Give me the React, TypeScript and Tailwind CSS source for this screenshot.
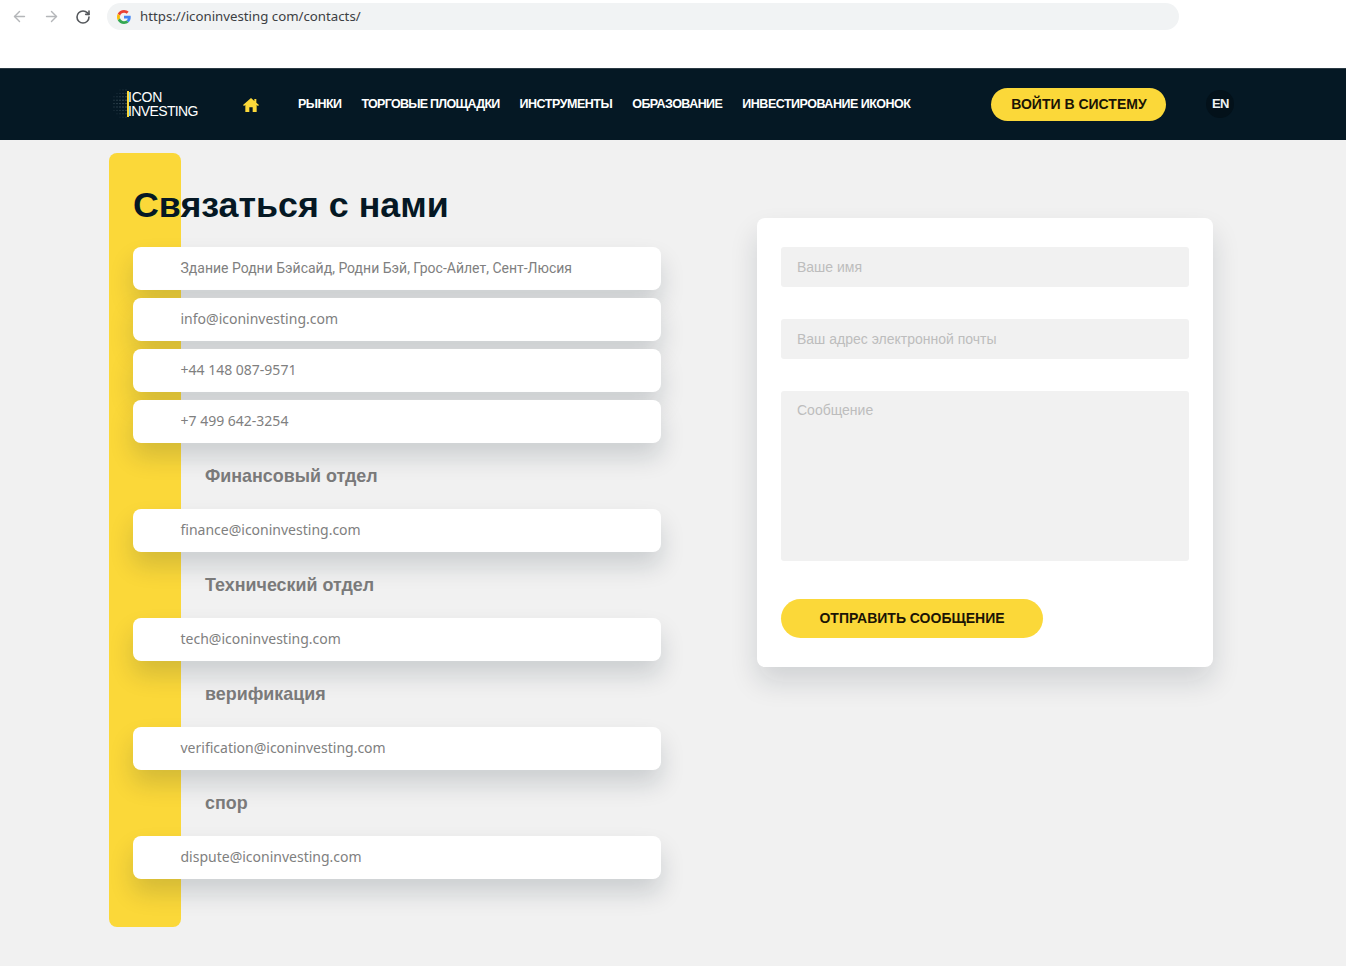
import { ArrowLeft, ArrowRight, RotateCw } from "lucide-react";

const navItems = [
  { label: "РЫНКИ", className: "" },
  { label: "ТОРГОВЫЕ ПЛОЩАДКИ", className: "tracking-[-0.72px]" },
  { label: "ИНСТРУМЕНТЫ", className: "tracking-[-0.48px]" },
  { label: "ОБРАЗОВАНИЕ", className: "" },
  { label: "ИНВЕСТИРОВАНИЕ ИКОНОК", className: "tracking-[-0.5px]" },
];

const dots: [number, number, number][] = [];
for (let col = 0; col < 5; col++) {
  for (let row = 0; row < 9; row++) {
    const dist = Math.abs(row - 4) + (4 - col) * 0.7;
    if (dist < 5.5) dots.push([col * 3 + 1, row * 3.4 + 1, 0.7 - dist * 0.11]);
  }
}

const Logo = () => (
  <div className="flex items-center w-[86px] h-[32px]">
    <svg width="14" height="32" viewBox="0 0 14 32" className="shrink-0">
      {dots.map(([x, y, o]) => (
        <circle key={`${x}-${y}`} cx={x} cy={y} r="0.7" fill="#8fa3ad" opacity={o} />
      ))}
    </svg>
    <div className="relative h-[28px] w-[72px] shrink-0 -mt-[1px] text-white text-[14px] leading-[14px] tracking-[-0.62px]">
      <span className="absolute left-0 top-[1px] w-[2px] h-[26px] bg-[#fbd839]" />
      <div className="pl-[1px] tracking-[-0.2px]">ICON</div>
      <div className="pl-[1px]">INVESTING</div>
    </div>
  </div>
);

const GoogleG = () => (
  <svg width="14" height="14" viewBox="0 0 48 48">
    <path fill="#EA4335" d="M24 9.5c3.5 0 6.6 1.2 9.1 3.6l6.8-6.8C35.8 2.4 30.3 0 24 0 14.6 0 6.5 5.4 2.6 13.2l7.9 6.2C12.4 13.7 17.7 9.5 24 9.5z" />
    <path fill="#4285F4" d="M47 24.5c0-1.6-.1-3.1-.4-4.5H24v9h12.9c-.6 3-2.2 5.5-4.7 7.2l7.6 5.9C44.2 37.9 47 31.8 47 24.5z" />
    <path fill="#FBBC05" d="M10.5 28.6c-.5-1.4-.8-3-.8-4.6s.3-3.2.8-4.6l-7.9-6.2C.9 16.5 0 20.1 0 24s.9 7.5 2.6 10.8l7.9-6.2z" />
    <path fill="#34A853" d="M24 48c6.5 0 11.9-2.1 15.8-5.8l-7.6-5.9c-2.1 1.4-4.9 2.3-8.2 2.3-6.3 0-11.6-4.2-13.5-9.9l-7.9 6.2C6.5 42.6 14.6 48 24 48z" />
  </svg>
);

const BrowserBar = () => (
  <div className="h-[68px] bg-white pt-[3px] pl-[11px] flex items-start">
    <div className="flex items-center h-[27px] gap-[15px]">
      <ArrowLeft className="w-[17px] h-[17px] text-[#b4b6b9]" />
      <ArrowRight className="w-[17px] h-[17px] text-[#b4b6b9]" />
      <RotateCw className="w-[16px] h-[16px] text-[#55585c]" strokeWidth={2.4} />
    </div>
    <div className="ml-[16px] w-[1072px] h-[27px] rounded-full bg-[#f1f3f4] flex items-center pl-[10px] gap-[9px]">
      <GoogleG />
      <span className="mt-[1px] font-['Noto_Sans',sans-serif] text-[13.25px] text-[#3c4043]">https://iconinvesting com/contacts/</span>
    </div>
  </div>
);

const Header = () => (
  <header className="h-[72px] bg-[#051824] pl-[113px] flex items-center font-['Liberation_Sans',sans-serif] border-t border-[#2b3a44]">
    <Logo />
    <svg width="16" height="14" viewBox="0 0 24 21" className="ml-[43.5px] shrink-0">
      <path fill="#fbd839" d="M12 0 0 10.5l1.5 1.6L3.5 10.4V21h6v-7h5v7h6V10.4l2 1.7 1.5-1.6-4-3.5V1.5h-3v2.9z" />
    </svg>
    <nav className="ml-[39.5px] flex gap-[20px] text-white text-[12.5px] font-bold tracking-[-0.55px]">
      {navItems.map((item) => (
        <a key={item.label} className={`whitespace-nowrap ${item.className}`}>{item.label}</a>
      ))}
    </nav>
    <button className="ml-[81px] w-[175px] h-[33px] rounded-full bg-[#fbd839] text-[#1a1405] text-[14px] font-bold">
      ВОЙТИ В СИСТЕМУ
    </button>
    <div className="ml-[40px] mb-[2px] w-[28px] h-[28px] rounded-full bg-[#03111a] flex items-center justify-center text-[#eef1f3] text-[13px] font-bold tracking-[-0.6px]">
      EN
    </div>
  </header>
);

const ContactRow = ({ text, cyr }: { text: string; cyr?: boolean }) => (
  <div className={`h-[43px] w-[528px] rounded-[8px] bg-white pl-[47.5px] flex items-center shadow-[0_14px_24px_rgba(15,30,45,0.16)] text-[#808080] text-[14px] ${cyr ? "font-['Roboto',sans-serif]" : "font-['Noto_Sans',sans-serif] pb-[2px]"}`}>
    {text}
  </div>
);

const DeptTitle = ({ text }: { text: string }) => (
  <h3 className="h-[66px] pl-[72px] flex items-center font-['Liberation_Sans',sans-serif] font-bold text-[17.9px] text-[#7a7a7a]">
    {text}
  </h3>
);

const ContactForm = () => (
  <form className="mt-[78px] ml-[96px] w-[456px] h-[449px] rounded-[8px] bg-white px-[24px] pt-[29px] shadow-[0_15px_28px_rgba(15,30,45,0.14)] font-['Liberation_Sans',sans-serif] text-[14px] text-[#bdbdbd]">
    <div className="h-[40px] rounded-[3px] bg-[#f1f1f1] pl-[16px] flex items-center">Ваше имя</div>
    <div className="mt-[32px] h-[40px] rounded-[3px] bg-[#f1f1f1] pl-[16px] flex items-center">Ваш адрес электронной почты</div>
    <div className="mt-[32px] h-[170px] rounded-[3px] bg-[#f1f1f1] pl-[16px] pt-[9px]">Сообщение</div>
    <button type="button" className="mt-[38px] w-[262px] h-[39px] rounded-full bg-[#fbd839] text-[#1a1405] text-[14px] font-bold">
      ОТПРАВИТЬ СООБЩЕНИЕ
    </button>
  </form>
);

export default function App() {
  return (
    <div className="min-h-[966px] bg-[#f1f1f1]">
      <BrowserBar />
      <Header />
      <main className="relative h-[826px] pl-[133px] flex items-start">
        <div className="absolute left-[109px] top-[13px] w-[72px] h-[774px] rounded-[8px] bg-[#fbd839]" />
        <div className="relative w-[528px]">
          <h1 className="h-[107px] pt-[43px] font-['Liberation_Sans',sans-serif] font-bold text-[35.8px] leading-[44px] text-[#051824] whitespace-nowrap">
            Связаться с нами
          </h1>
          <div className="flex flex-col gap-[8px]">
            <ContactRow cyr text="Здание Родни Бэйсайд, Родни Бэй, Грос-Айлет, Сент-Люсия" />
            <ContactRow text="info@iconinvesting.com" />
            <ContactRow text="+44 148 087-9571" />
            <ContactRow text="+7 499 642-3254" />
          </div>
          <DeptTitle text="Финансовый отдел" />
          <ContactRow text="finance@iconinvesting.com" />
          <DeptTitle text="Технический отдел" />
          <ContactRow text="tech@iconinvesting.com" />
          <DeptTitle text="верификация" />
          <ContactRow text="verification@iconinvesting.com" />
          <DeptTitle text="спор" />
          <ContactRow text="dispute@iconinvesting.com" />
        </div>
        <ContactForm />
      </main>
    </div>
  );
}
